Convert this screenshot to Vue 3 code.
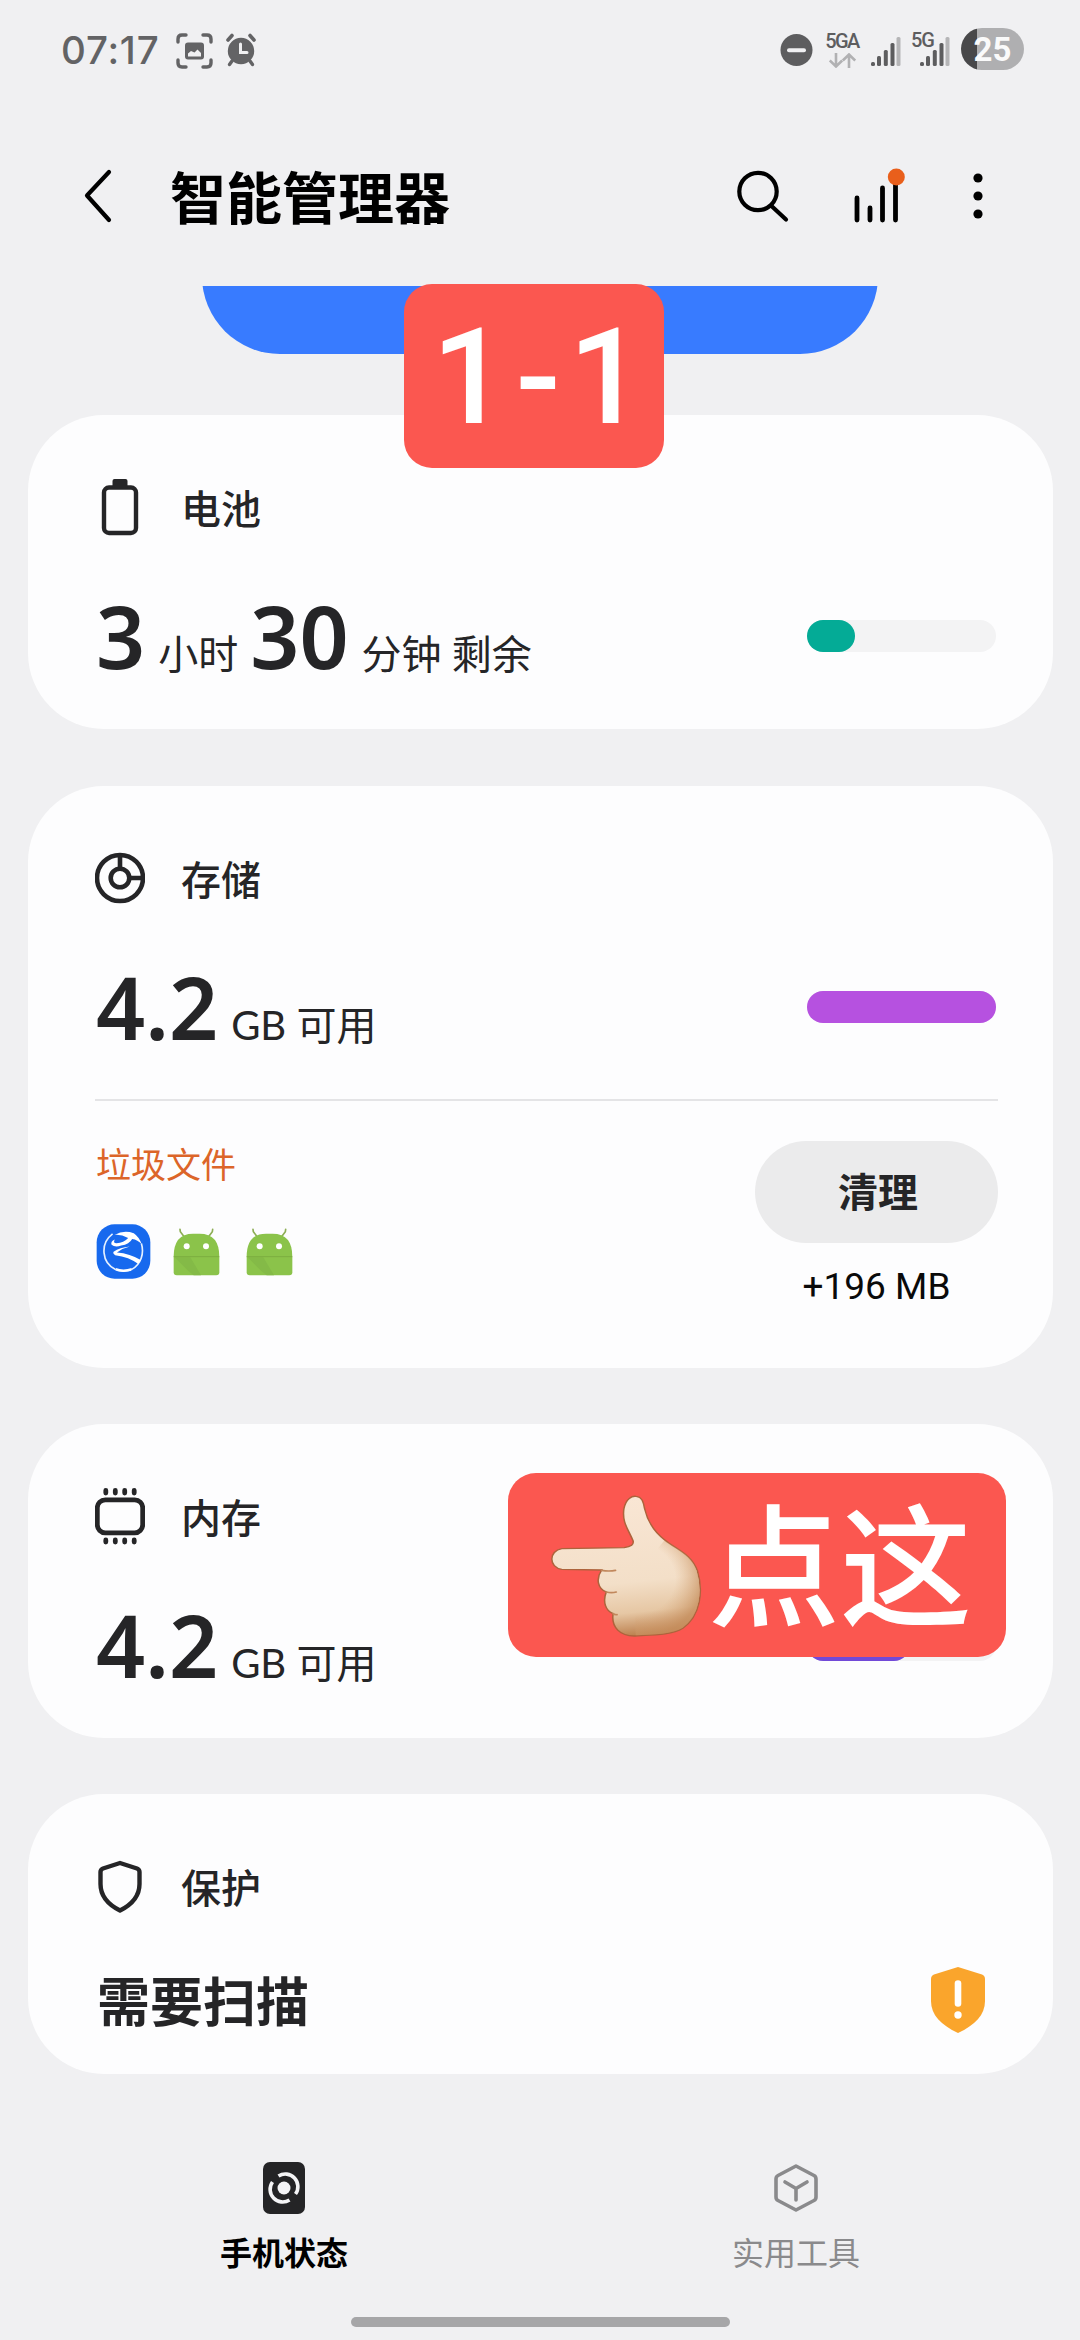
<script setup>
const signalBars = [
  { x: 0, h: 4 },
  { x: 6, h: 10 },
  { x: 12.8, h: 16 },
  { x: 19.5, h: 23 },
  { x: 25.5, h: 29 },
]

const battery = [
  { text: '3', big: true },
  { text: '小时' },
  { text: '30', big: true },
  { text: '分钟 剩余' },
]
const gigabytes = [{ text: '4.2', big: true }, { text: 'GB 可用' }]
</script>

<template>
  <div class="screen">
    <header class="status">
      <span class="clock">07:17</span>
      <svg class="st-shot" width="37" height="36" viewBox="0 0 37 36" fill="none" stroke="#636365" stroke-width="3.4" stroke-linecap="round">
        <path d="M2 9V6q0-4 4-4h4M27 2h4q4 0 4 4v3M35 27v3q0 4-4 4h-4M10 34H6q-4 0-4-4v-3" />
        <rect x="9" y="9.500" width="19" height="17" rx="3" fill="#636365" stroke="none" />
        <path d="M12 23.500v-3l3-2.500 3.500 1.500 3-3 3.500 3.500v3.500z" fill="#f0f0f2" stroke="none" />
      </svg>
      <svg class="st-alarm" width="30" height="34" viewBox="0 0 30 34" fill="none" stroke="#636365" stroke-linecap="round">
        <circle cx="15" cy="18" r="13.200" fill="#636365" stroke="none" />
        <path d="M2 7l4-4.500M28 7l-4-4.500" stroke-width="3.600" />
        <path d="M6 28l-2.500 3.500M24 28l2.500 3.500" stroke-width="3.400" />
        <path d="M14.500 11v8.500h6.500" stroke="#f0f0f2" stroke-width="3" />
      </svg>
      <span class="grow"></span>
      <svg width="33" height="32" viewBox="0 0 33 32">
        <circle cx="16.500" cy="16" r="16" fill="#5d5d5f" />
        <path d="M9 16.300h15" stroke="#f0f0f2" stroke-width="4" stroke-linecap="round" />
      </svg>
      <div class="net">
        <span class="tag">5GA</span>
        <svg width="27" height="15" viewBox="0 0 27 15" fill="none" stroke="#b1b1b3" stroke-width="2.600">
          <path d="M7 0v13M.8 7.500L7 13.500l6.200-6M20 15V2M13.800 7.500L20 1.500l6.200 6" />
        </svg>
      </div>
      <svg class="sig" width="30" height="29" viewBox="0 0 30 29">
        <rect v-for="(b, i) in signalBars" :key="i" :x="b.x" :y="29 - b.h" width="4" :height="b.h" rx="1.500" :fill="i === 4 ? '#b5b5b7' : '#5d5d5f'" />
      </svg>
      <div class="sig5">
        <span class="tag five">5G</span>
        <svg width="30" height="29" viewBox="0 0 30 29">
          <rect v-for="(b, i) in signalBars" :key="i" :x="b.x" :y="29 - b.h" width="4" :height="b.h" rx="1.500" :fill="i === 4 ? '#b5b5b7' : '#5d5d5f'" />
        </svg>
      </div>
      <div class="pill">25</div>
    </header>

    <nav class="bar">
      <svg width="30" height="56" viewBox="0 0 30 56" fill="none" stroke="#000" stroke-width="4.200" stroke-linecap="round" stroke-linejoin="round">
        <path d="M27 4L5 27.500L27 52" />
      </svg>
      <h1>智能管理器</h1>
      <svg class="search" width="52" height="54" viewBox="0 0 52 54" fill="none" stroke="#000" stroke-width="4.200" stroke-linecap="round">
        <circle cx="21" cy="22.500" r="18.700" />
        <path d="M34.500 37L49 50.500" />
      </svg>
      <svg class="chart" width="52" height="56" viewBox="0 0 52 56" stroke="#000" stroke-width="4.800" stroke-linecap="round">
        <path d="M3 30v22M16 40v12M28.500 20v32M41.500 14v38" />
        <circle cx="42.300" cy="9" r="8.500" fill="#e95f1b" stroke="none" />
      </svg>
      <svg width="10" height="48" viewBox="0 0 10 48">
        <circle cx="5" cy="6" r="4.600" /><circle cx="5" cy="24" r="4.600" /><circle cx="5" cy="42" r="4.600" />
      </svg>
    </nav>

    <div class="hero"><div class="hero-btn"></div></div>

    <main>
      <section class="card">
        <div class="head">
          <svg width="50" height="60" viewBox="0 0 50 60">
            <rect x="9" y="10.500" width="32" height="45.500" rx="5" fill="none" stroke="#252527" stroke-width="4.400" />
            <rect x="17.500" y="2" width="15" height="9" rx="2" fill="#252527" />
          </svg>
          <h2>电池</h2>
        </div>
        <div class="value">
          <p><span v-for="(t, i) in battery" :key="i" :class="t.big ? 'num' : 'unit'">{{ t.text }}</span></p>
          <div class="meter"><i class="green"></i></div>
        </div>
      </section>

      <section class="card storage">
        <div class="head">
          <svg width="50" height="60" viewBox="0 0 50 60" fill="none" stroke="#252527" stroke-width="4.600">
            <circle cx="25" cy="30" r="23" />
            <circle cx="25" cy="30" r="9.300" />
            <path d="M25 7v13.500M34.500 30H48" />
          </svg>
          <h2>存储</h2>
        </div>
        <div class="value">
          <p><span v-for="(t, i) in gigabytes" :key="i" :class="t.big ? 'num' : 'unit'">{{ t.text }}</span></p>
          <div class="meter"><i class="violet"></i></div>
        </div>
        <div class="junk">
          <div class="junk-info">
            <h3>垃圾文件</h3>
            <div class="apps">
              <svg width="55" height="55" viewBox="109 431 164 166">
                <rect x="110" y="432" width="162" height="164" rx="54" fill="#1769ee" />
                <path d="M158 461C120 490 124 548 168 569Q192 578 216 568C244 552 254 520 245 490" fill="none" stroke="#e4f0ff" stroke-width="5" />
                <path d="M164 464Q192 448 222 459Q238 470 246 492Q234 478 217 476Q209 492 184 496Q166 503 155 494Q151 484 165 478Q158 489 170 489Q192 488 205 473Q184 462 164 464z" fill="#fff" />
                <path d="M210 499Q180 502 161 515Q158 521 166 525Q208 530 236 552L243 540Q211 520 171 517Q188 504 210 499z" fill="#fff" />
                <path d="M168 564Q190 572 216 564L213 573Q190 578 170 573z" fill="#fff" />
              </svg>
              <svg v-for="n in 2" :key="n" class="droid" width="47" height="48" viewBox="340 439 141 144">
                <path d="M361 443l1 7 12 16M459 443l-1 7-12 16" fill="none" stroke="#8dae55" stroke-width="5" stroke-linecap="round" />
                <path d="M342 525Q342 456 400 456H420Q479 456 479 525V572Q479 581 470 581H351Q342 581 342 572z" fill="#8bc34a" />
                <path d="M345 527L386 568L402 581H424L392 527z" fill="#84ba47" />
                <path d="M342 525H479" stroke="#78a83f" stroke-width="2.500" />
                <circle cx="381" cy="494" r="9" fill="#fff" /><circle cx="439" cy="494" r="9" fill="#fff" />
              </svg>
            </div>
          </div>
          <div class="junk-act">
            <button>清理</button>
            <span>+196 MB</span>
          </div>
        </div>
      </section>

      <section class="card">
        <div class="head">
          <svg width="50" height="60" viewBox="0 0 50 60" fill="none" stroke="#252527">
            <rect x="2.300" y="13.800" width="45.400" height="33" rx="8" stroke-width="4.800" />
            <path d="M10.800 4.500v2.500M20.300 4.500v2.500M29.700 4.500v2.500M39.200 4.500v2.500M10.800 54v2M20.300 54v2M29.700 54v2M39.200 54v2" stroke-width="4.800" stroke-linecap="round" />
          </svg>
          <h2>内存</h2>
        </div>
        <div class="value">
          <p><span v-for="(t, i) in gigabytes" :key="i" :class="t.big ? 'num' : 'unit'">{{ t.text }}</span></p>
          <div class="meter"><i class="indigo"></i></div>
        </div>
      </section>

      <section class="card guard">
        <div class="head">
          <svg width="50" height="60" viewBox="0 0 50 60" fill="none" stroke="#252527" stroke-width="4.400" stroke-linejoin="round">
            <path d="M25 7L42 12.500Q44.500 13.500 44.500 16V28C44.500 39 38 48 25 54.500C12 48 5.500 39 5.500 28V16Q5.500 13.500 8 12.500z" />
          </svg>
          <h2>保护</h2>
        </div>
        <div class="scan">
          <strong>需要扫描</strong>
          <svg width="54" height="66" viewBox="0 0 54 66">
            <path d="M27 0L51 7.500Q54 8.500 54 12V34C54 48 44 58 27 66C10 58 0 48 0 34V12Q0 8.500 3 7.500z" fill="#faa52c" />
            <path d="M27 16.500v20" stroke="#fff" stroke-width="6.600" stroke-linecap="round" />
            <circle cx="27" cy="48" r="3.700" fill="#fff" />
          </svg>
        </div>
      </section>
    </main>

    <footer class="tabs">
      <div class="tab on">
        <svg width="42" height="52" viewBox="0 0 42 52">
          <rect width="42" height="52" rx="7" fill="#242426" />
          <circle cx="21" cy="26" r="6.500" fill="#f4f4f6" />
          <path d="M15.500 14A12.600 12.600 0 0 1 32.500 32M26.500 38A12.600 12.600 0 0 1 9.500 20" fill="none" stroke="#f4f4f6" stroke-width="3.600" />
        </svg>
        <span>手机状态</span>
      </div>
      <div class="tab">
        <svg width="44" height="52" viewBox="0 0 44 52" fill="none" stroke="#8a8a8c" stroke-width="3.600" stroke-linejoin="round" stroke-linecap="round">
          <path d="M22 4L40 13.500Q42 14.500 42 17V35Q42 37.500 40 38.500L22 48L4 38.500Q2 37.500 2 35V17Q2 14.500 4 13.500z" />
          <path d="M11 20L22 26.500L33 20M22 26.500V38" />
        </svg>
        <span>实用工具</span>
      </div>
    </footer>
    <div class="home"></div>

    <div class="note step">1-1</div>
    <div class="note tap">
      <svg width="152" height="142" viewBox="0 0 152 142">
        <defs>
          <linearGradient id="skin" gradientUnits="userSpaceOnUse" x1="380" y1="180" x2="430" y2="592">
            <stop offset="0" stop-color="#f9e6d4" /><stop offset=".6" stop-color="#f3dfc8" /><stop offset=".82" stop-color="#e6c7a4" /><stop offset="1" stop-color="#b97b48" />
          </linearGradient>
          <radialGradient id="palm" gradientUnits="userSpaceOnUse" cx="400" cy="420" r="180">
            <stop offset=".6" stop-color="#d9ab7e" stop-opacity="0" /><stop offset="1" stop-color="#c68f5e" stop-opacity=".75" />
          </radialGradient>
        </defs>
        <g transform="scale(.3827 .3333) translate(-181 -168)">
          <path d="M212 329L375 326Q402 322 398 305C385 270 369 250 374 210C379 178 396 170 406 172C422 174 425 190 428 208C437 252 455 280 480 302C515 334 550 345 566 395C582 455 575 530 528 568C500 588 455 588 403 591C365 592 340 565 346 524C326 515 318 488 328 459C306 450 300 420 316 393L212 391C177 386 177 335 212 329z" fill="url(#skin)" stroke="#ad633c" stroke-width="4" />
          <path d="M480 304C515 334 550 345 564 395C580 455 573 530 528 566C500 586 455 586 405 589L400 420z" fill="url(#palm)" />
          <path d="M316 394Q335 398 352 394M328 459Q342 463 354 459M346 524Q350 528 356 527" fill="none" stroke="#c1875c" stroke-width="5" stroke-linecap="round" />
        </g>
      </svg>
      <span>点这</span>
    </div>
  </div>
</template>

<style>
body {
  background: #f0f0f2;
}
</style>

<style scoped>
.screen {
  position: relative;
  width: 1080px;
  height: 2340px;
  overflow: hidden;
  background: #f0f0f2;
  color: #252527;
  font-family: Roboto, "Noto Sans CJK SC", sans-serif;
}
h1, h2, h3, p { margin: 0; }
svg { display: block; flex: none; }
.status {
  display: flex;
  align-items: center;
  box-sizing: border-box;
  height: 100px;
  padding: 0 56px 0 61px;
}
.clock {
  width: 115px;
  font: 500 38.5px/100px Inter, sans-serif;
  letter-spacing: 0.8px;
  color: #636365;
}
.st-shot { margin-top: 1px; }
.st-alarm { margin-left: 13px; }
.grow { flex: 1; }
.net {
  display: flex;
  flex-direction: column;
  align-items: center;
  gap: 4px;
  width: 30px;
  margin: 2px 0 0 14px;
}
.tag {
  font: 500 20px/15px Roboto, sans-serif;
  letter-spacing: -1.6px;
  color: #5d5d5f;
}
.sig { margin: 3px 0 0 14px; }
.sig5 {
  position: relative;
  margin: 3px 0 0 19px;
}
.five {
  position: absolute;
  top: -4px;
  left: -9px;
  letter-spacing: -1px;
}
.pill {
  width: 63px;
  height: 42px;
  margin: -2px 0 0 11px;
  border-radius: 21px;
  background: linear-gradient(90deg, #48484a 16px, #afafb1 16px);
  font: 700 33px/43px Roboto, sans-serif;
  text-align: center;
  color: #fafafa;
}
.bar {
  display: flex;
  align-items: center;
  box-sizing: border-box;
  height: 186px;
  padding: 6px 97px 0 82px;
}
.bar h1 {
  flex: 1;
  margin-left: 58px;
  padding-top: 7px;
  font-size: 56px;
  font-weight: 700;
  line-height: 80px;
  color: #000;
}
.chart { margin: 0 67px 0 65px; }
.hero {
  display: flex;
  flex-direction: column;
  justify-content: flex-end;
  align-items: center;
  height: 68px;
  overflow: hidden;
}
.hero-btn {
  flex: none;
  width: 676px;
  height: 156px;
  border-radius: 78px;
  background: #387bff;
}
main {
  display: flex;
  flex-direction: column;
  gap: 56px;
  margin: 61px 27px 0 28px;
}
.card {
  box-sizing: border-box;
  height: 314px;
  padding: 62px 55px 0 67px;
  border-radius: 76px;
  background: #fdfdfe;
}
.storage { height: 582px; }
.guard { height: 280px; }
.card:first-child { margin-bottom: 1px; }
.head {
  display: flex;
  align-items: center;
  gap: 36px;
  height: 60px;
}
.head h2 {
  padding-top: 8px;
  font-size: 40px;
  font-weight: 500;
  line-height: 60px;
}
.value {
  display: flex;
  align-items: center;
  justify-content: space-between;
  height: 100px;
  margin-top: 49px;
}
.value p {
  display: flex;
  align-items: baseline;
  padding-left: 1px;
  white-space: nowrap;
}
.num {
  font: 600 86px/100px "Noto Sans", sans-serif;
}
.unit {
  margin: 0 12px 0 13px;
  font: 400 40px/60px Lato, "Noto Sans CJK SC", sans-serif;
}
.meter {
  width: 189px;
  height: 32px;
  margin-right: 2px;
  border-radius: 16px;
  background: #f3f3f4;
}
.meter i {
  display: block;
  height: 32px;
  border-radius: 16px;
}
.green { width: 48px; background: #04ab96; }
.violet { background: #b651e0; }
.indigo { width: 103px; background: #7149d8; }
.junk {
  display: flex;
  justify-content: space-between;
  margin-top: 42px;
  border-top: 2px solid #e4e4e6;
}
.junk-info { padding: 40px 0 0 1px; }
.junk h3 {
  font-size: 35px;
  font-weight: 400;
  line-height: 52px;
  color: #dc6529;
}
.apps {
  display: flex;
  align-items: center;
  margin-top: 31px;
}
.droid { margin-left: 22px; }
.droid + .droid { margin-left: 26px; }
.junk-act {
  display: flex;
  flex-direction: column;
  align-items: center;
  padding-top: 40px;
}
.junk-act button {
  width: 243px;
  height: 102px;
  padding: 0 0 3px 3px;
  border: 0;
  border-radius: 51px;
  background: #ebebec;
  font: 700 40px/99px "Noto Sans CJK SC", sans-serif;
  color: #252527;
}
.junk-act span {
  margin-top: 22px;
  font-size: 37px;
  line-height: 44px;
  color: #0a0a0a;
}
.scan {
  display: flex;
  align-items: center;
  justify-content: space-between;
  margin-top: 51px;
  padding: 0 13px 0 2px;
}
.scan strong {
  margin-top: 9px;
  font-size: 53px;
  font-weight: 700;
  line-height: 57px;
}
.tabs {
  display: flex;
  margin: 88px 28px 0;
}
.tab {
  display: flex;
  flex: 1;
  flex-direction: column;
  align-items: center;
  gap: 16px;
  font-size: 32px;
  line-height: 48px;
  color: #8a8a8c;
}
.on {
  font-weight: 700;
  color: #000;
}
.home {
  width: 379px;
  height: 10px;
  margin: 39px auto 0;
  border-radius: 5px;
  background: #a6a6a8;
}
.note {
  position: absolute;
  display: flex;
  align-items: center;
  box-sizing: border-box;
  height: 184px;
  border-radius: 28px;
  background: #fb5750;
  color: #fff;
  font-weight: 500;
}
.step {
  top: 284px;
  left: 404px;
  width: 260px;
  justify-content: center;
  padding: 3px 0 0 16px;
  font-size: 133px;
  letter-spacing: 8px;
}
.tap {
  top: 1473px;
  left: 508px;
  width: 498px;
  padding: 2px 0 0 42px;
  font-size: 132px;
}
.tap span {
  margin-left: 6px;
  padding-top: 10px;
  line-height: 170px;
  white-space: nowrap;
}
</style>
